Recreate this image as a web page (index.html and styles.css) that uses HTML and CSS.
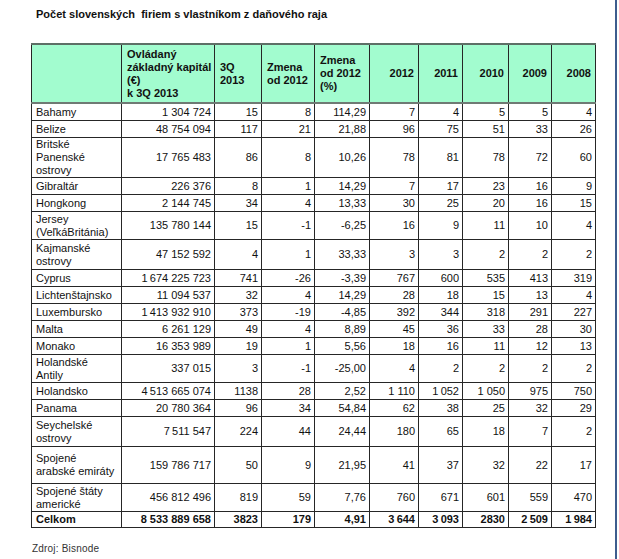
FILE: index.html
```html
<!DOCTYPE html>
<html lang="sk">
<head>
<meta charset="utf-8">
<title>Počet slovenských firiem s vlastníkom z daňového raja</title>
<link rel="stylesheet" href="styles.css">
</head>
<body>
<div class="frame">
  <div class="title">Počet slovenských&nbsp; firiem s vlastníkom z daňového raja</div>
  <table class="data">
    <colgroup>
      <col class="c-name"><col class="c-cap"><col class="c-3q"><col class="c-zm"><col class="c-zp">
      <col class="c-y12"><col class="c-y11"><col class="c-y10"><col class="c-y09"><col class="c-y08">
    </colgroup>
    <thead>
      <tr class="head">
        <th></th>
        <th class="hl">Ovládaný<br>základný kapitál<br>(€)<br>k 3Q 2013</th>
        <th class="hl">3Q<br>2013</th>
        <th class="hl">Zmena<br>od 2012</th>
        <th class="hl">Zmena<br>od 2012<br>(%)</th>
        <th class="hr">2012</th>
        <th class="hr">2011</th>
        <th class="hr">2010</th>
        <th class="hr">2009</th>
        <th class="hr">2008</th>
      </tr>
    </thead>
    <tbody>
      <tr class="r1"><td>Bahamy</td><td>1 304 724</td><td>15</td><td>8</td><td>114,29</td><td>7</td><td>4</td><td>5</td><td>5</td><td>4</td></tr>
      <tr class="r1"><td>Belize</td><td>48 754 094</td><td>117</td><td>21</td><td>21,88</td><td>96</td><td>75</td><td>51</td><td>33</td><td>26</td></tr>
      <tr class="r3"><td>Britské<br>Panenské<br>ostrovy</td><td>17 765 483</td><td>86</td><td>8</td><td>10,26</td><td>78</td><td>81</td><td>78</td><td>72</td><td>60</td></tr>
      <tr class="r1"><td>Gibraltár</td><td>226 376</td><td>8</td><td>1</td><td>14,29</td><td>7</td><td>17</td><td>23</td><td>16</td><td>9</td></tr>
      <tr class="r1"><td>Hongkong</td><td>2 144 745</td><td>34</td><td>4</td><td>13,33</td><td>30</td><td>25</td><td>20</td><td>16</td><td>15</td></tr>
      <tr class="r2"><td>Jersey<br>(VeľkáBritánia)</td><td>135 780 144</td><td>15</td><td>-1</td><td>-6,25</td><td>16</td><td>9</td><td>11</td><td>10</td><td>4</td></tr>
      <tr class="r2b"><td>Kajmanské<br>ostrovy</td><td>47 152 592</td><td>4</td><td>1</td><td>33,33</td><td>3</td><td>3</td><td>2</td><td>2</td><td>2</td></tr>
      <tr class="r1"><td>Cyprus</td><td>1&#8201;674 225 723</td><td>741</td><td>-26</td><td>-3,39</td><td>767</td><td>600</td><td>535</td><td>413</td><td>319</td></tr>
      <tr class="r1"><td>Lichtenštajnsko</td><td>11 094 537</td><td>32</td><td>4</td><td>14,29</td><td>28</td><td>18</td><td>15</td><td>13</td><td>4</td></tr>
      <tr class="r1"><td>Luxembursko</td><td>1&#8201;413 932 910</td><td>373</td><td>-19</td><td>-4,85</td><td>392</td><td>344</td><td>318</td><td>291</td><td>227</td></tr>
      <tr class="r1"><td>Malta</td><td>6 261 129</td><td>49</td><td>4</td><td>8,89</td><td>45</td><td>36</td><td>33</td><td>28</td><td>30</td></tr>
      <tr class="r1"><td>Monako</td><td>16 353 989</td><td>19</td><td>1</td><td>5,56</td><td>18</td><td>16</td><td>11</td><td>12</td><td>13</td></tr>
      <tr class="r2"><td>Holandské<br>Antily</td><td>337 015</td><td>3</td><td>-1</td><td>-25,00</td><td>4</td><td>2</td><td>2</td><td>2</td><td>2</td></tr>
      <tr class="r1"><td>Holandsko</td><td>4&#8201;513 665 074</td><td>1138</td><td>28</td><td>2,52</td><td>1 110</td><td>1&#8201;052</td><td>1 050</td><td>975</td><td>750</td></tr>
      <tr class="r1"><td>Panama</td><td>20 780 364</td><td>96</td><td>34</td><td>54,84</td><td>62</td><td>38</td><td>25</td><td>32</td><td>29</td></tr>
      <tr class="r2b"><td>Seychelské<br>ostrovy</td><td>7&#8201;511 547</td><td>224</td><td>44</td><td>24,44</td><td>180</td><td>65</td><td>18</td><td>7</td><td>2</td></tr>
      <tr class="r2x"><td>Spojené<br>arabské emiráty</td><td>159 786 717</td><td>50</td><td>9</td><td>21,95</td><td>41</td><td>37</td><td>32</td><td>22</td><td>17</td></tr>
      <tr class="r2"><td>Spojené štáty<br>americké</td><td>456 812 496</td><td>819</td><td>59</td><td>7,76</td><td>760</td><td>671</td><td>601</td><td>559</td><td>470</td></tr>
      <tr class="r1 total"><td>Celkom</td><td>8 533 889 658</td><td>3823</td><td>179</td><td>4,91</td><td>3&#8201;644</td><td>3&#8201;093</td><td>2830</td><td>2&#8201;509</td><td>1&#8201;984</td></tr>
    </tbody>
  </table>
  <div class="source">Zdroj: Bisnode</div>
</div>
</body>
</html>
```

FILE: styles.css
```css
html, body {
  margin: 0;
  padding: 0;
  background: #ffffff;
}

body {
  width: 619px;
  height: 559px;
  overflow: hidden;
  font-family: "Liberation Sans", Arial, sans-serif;
  color: #111111;
}

.frame {
  width: 615px;
  height: 559px;
  border-right: 2px solid #3e5d8e;
  box-sizing: content-box;
}

.title {
  padding: 8px 0 0 36px;
  font-size: 11px;
  line-height: 13px;
  font-weight: bold;
  height: 13px;
}

.data {
  margin: 22px 0 0 31px;
  border-collapse: collapse;
  table-layout: fixed;
  width: 565px;
  font-size: 11px;
  line-height: 13px;
  border-top: 2px solid #5d6f66;
}

.c-name { width: 90px; }
.c-cap { width: 93px; }
.c-3q { width: 47px; }
.c-zm { width: 53px; }
.c-zp { width: 55px; }
.c-y12 { width: 49px; }
.c-y11 { width: 44px; }
.c-y10 { width: 46px; }
.c-y09 { width: 43px; }
.c-y08 { width: 44px; }

.data th,
.data td {
  border: 1px solid #262626;
  padding: 0 3px 0 4px;
  vertical-align: middle;
  white-space: nowrap;
  overflow: hidden;
}

.head th {
  background: #a2fccf;
  height: 57px;
  font-weight: bold;
  border-bottom: 2px solid #6f7a74;
}

.head .hl {
  text-align: left;
  padding-left: 5px;
}

.head .hr {
  text-align: right;
  padding-right: 4px;
}

.data td {
  text-align: right;
}

.data td:first-child {
  text-align: left;
  padding-left: 4px;
}

.r1 td { height: 16px; }
.r2 td { height: 27px; }
.r2b td { height: 29px; }
.r2x td { height: 36px; }
.r3 td { height: 38px; }

.total td {
  font-weight: bold;
  height: 15px;
}

.source {
  margin: 14px 0 0 32px;
  font-size: 10px;
  line-height: 13px;
  letter-spacing: 0.2px;
  color: #333333;
}
```
